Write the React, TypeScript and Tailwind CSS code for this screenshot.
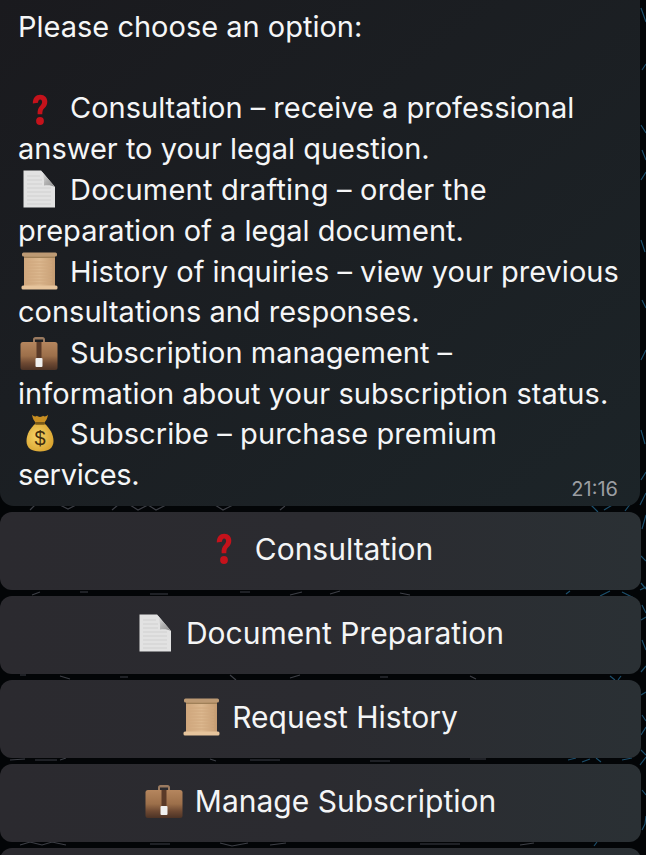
import React from "react";

type IconProps = { className?: string };

function QuestionIcon({ className }: IconProps) {
  return (
    <svg viewBox="0 0 16 32" className={className}>
      <path d="M0.800 9.500C0.800 4 3.800 0.800 8.300 0.800c4.400 0 7 2.900 7 7 0 3-1.300 4.800-3 6.500-1.500 1.500-2 2.800-2 6H5.600c-.2-4.300.7-6.500 2.500-8.400 1.300-1.400 2-2.300 2-3.900 0-1.600-.7-2.600-1.900-2.600-1.400 0-2.100 1.300-2.200 3.300z" fill="#c5121b" />
      <circle cx="8" cy="27" r="3.900" fill="#c5121b" />
    </svg>
  );
}

function DocIcon({ className }: IconProps) {
  return (
    <svg viewBox="0 0 32 38" className={className}>
      <defs>
        <linearGradient id="foldFill" x1="0" y1="0" x2="1" y2="1">
          <stop offset="0" stopColor="#f5f5f5" />
          <stop offset="0.5" stopColor="#b4b4b4" />
          <stop offset="1" stopColor="#8f8f8f" />
        </linearGradient>
      </defs>
      <path d="M0.500 0.500H18L32 17V37.500H0.500z" fill="#e2e2e2" />
      <path d="M4 6h13M4 10h15M4 14h15M4 18h24M4 22h24M4 26h24M4 30h24M4 34h24" stroke="#d0d0d0" strokeWidth="1" />
      <path d="M18 0.500L32 17c-3.500-1.800-7-2.300-11-1.500C21.500 10 20.500 4.500 18 0.500z" fill="url(#foldFill)" />
    </svg>
  );
}

function ScrollIcon({ className }: IconProps) {
  return (
    <svg viewBox="0 0 37 38" className={className}>
      <defs>
        <linearGradient id="scrollBody" x1="0" y1="0" x2="1" y2="0">
          <stop offset="0" stopColor="#cfa67c" />
          <stop offset="0.5" stopColor="#dcb88f" />
          <stop offset="1" stopColor="#c59c72" />
        </linearGradient>
      </defs>
      <rect x="3" y="3" width="31" height="32" fill="url(#scrollBody)" />
      <path d="M6 10h25M6 13h25M6 16h25M6 19h25M6 22h25M6 25h25M6 28h25M6 31h25" stroke="#d0a87e" strokeWidth="1" />
      <rect x="1" y="0.500" width="35" height="4" rx="1.500" fill="#bd9a74" />
      <rect x="3" y="4.500" width="31" height="1.500" fill="#a08058" />
      <rect x="0.500" y="33.500" width="36" height="4" rx="1.500" fill="#e6c49c" />
    </svg>
  );
}

function CaseIcon({ className, id }: IconProps & { id: string }) {
  return (
    <svg viewBox="0 0 38 35" className={className}>
      <path d="M13 8V3.500C13 2 14 1 15.500 1h7C24 1 25 2 25 3.500V8h-2V3.500h-8V8z" fill="#9a7a60" />
      <defs>
        <linearGradient id={id} x1="0" y1="0" x2="0" y2="1">
          <stop offset="0" stopColor="#b5865e" />
          <stop offset="0.5" stopColor="#9c6f4a" />
          <stop offset="0.75" stopColor="#6f4a33" />
          <stop offset="1" stopColor="#4c3225" />
        </linearGradient>
      </defs>
      <rect x="0.500" y="6" width="37" height="28" rx="2.500" fill={`url(#${id})`} />
      <rect x="16.500" y="6" width="5" height="17" fill="#5a3a28" />
      <rect x="15.500" y="22" width="7" height="9" rx="1" fill="#f0f0f0" />
    </svg>
  );
}

function BagIcon({ className }: IconProps) {
  return (
    <svg viewBox="0 0 28 38" className={className}>
      <defs>
        <radialGradient id="bagFill" cx="0.400" cy="0.450" r="0.750">
          <stop offset="0" stopColor="#f6d468" />
          <stop offset="1" stopColor="#d39a24" />
        </radialGradient>
      </defs>
      <path d="M6 0.800c2 2 3.500 2 5 1 1 1.500 5 1.500 6 0 1.500 1 3 1 5-1-.5 3.500-2 6-4 8.500h-8C8 6.800 6.500 4.300 6 0.800z" fill="#c98f22" />
      <path d="M9.500 9.500h9C23.500 14 27.500 20 27.500 27c0 7-5 10.500-13.500 10.500S.500 34 .500 27C.500 20 4.500 14 9.500 9.500z" fill="url(#bagFill)" />
      <rect x="9" y="8" width="10" height="2.800" rx="1" fill="#7a5a18" />
      <text x="14" y="31" textAnchor="middle" fontSize="20" fontFamily="Liberation Sans, sans-serif" fill="#3e2c0c">$</text>
    </svg>
  );
}

const lineClass = "block whitespace-nowrap";

function Slot({ children }: { children: React.ReactNode }) {
  return (
    <span className="inline-flex w-[52px] h-[38px] items-center align-[-8px]">
      {children}
    </span>
  );
}

function ActionButton({ icon, label, gap }: { icon?: React.ReactNode; label?: string; gap?: string }) {
  return (
    <div className="h-[78px] w-[641px] shrink-0 rounded-[12px] bg-gradient-to-r from-[#2b2a2f] via-[#2b2b30] to-[#2a3034] flex items-center justify-center pb-[4px] text-[#f4f5f6] text-[30px]">
      {label ? (
        <span className={`flex items-center ${gap}`}>
          {icon}
          <span>{label}</span>
        </span>
      ) : null}
    </div>
  );
}

function Backdrop() {
  return (
    <svg className="absolute inset-0 w-full h-full" viewBox="0 0 646 855" fill="none" strokeWidth="1.200">
      <g stroke="#1d4f6c">
        <path d="M641 8l5 14M642 70l4-6M641 125l5 8M642 150l4 10M641 180l5-8M641 240l4 12M642 300l4 8M641 360l5-10M641 430l4 14M641 480l5-8" />
        <path d="M640 505l6-12M646 515l-4 14M641 556l5 5M641 583l5 6M640 590l6-3M642 605l4 8M641 620l5-3M642 640l4 10M641 672l5-6M641 695l5-3M642 715l4 6M641 735l5-8M641 750l5 5M640 765l6-8M642 790l4 5M642 830l3-6 1-8" />
        <path d="M590 504l8 8M604 510l10-6M625 511l6-8M600 596l10-5M622 592l12 6M566 594l4-3M610 676l5 4M618 680l3-4M568 760l8-2M582 762l8-3M596 758l5 4M622 760l10-2M594 846l3-4" />
      </g>
      <g stroke="#3d3f46">
        <path d="M30 510l5-5M44 505h6M60 505l8 4 8-4M112 510l6-5M130 505l8 5 10-5 8 5 10-5M215 505l8 5 10-5M280 510l5-4" />
        <path d="M40 592l-8 3M80 592h8M150 594h18M240 592h10M290 595l12-3M330 594l10-3M400 593l10 2" />
        <path d="M20 675h6M60 676l10 3M120 677h8M230 675l6 5M290 678l10-3M380 677h8M470 676l6 3" />
        <path d="M10 760l15-1M35 760h22M60 760l6-2M210 759l6 2M250 760h30M370 761h20M470 759h16" />
        <path d="M20 845l10-3 12 3 10-3 14 3M150 844h20M220 843l12 3 16-3M270 845l16-2M420 844h40M520 845l14-2" />
      </g>
    </svg>
  );
}

export default function App() {
  return (
    <div className="relative w-[646px] h-[855px] overflow-hidden bg-[#030507] font-['Inter','Liberation_Sans',sans-serif]">
      <Backdrop />
      <div className="relative flex flex-col gap-[6px]">
        <div className="h-[506px] w-[640px] rounded-b-[14px] bg-gradient-to-br from-[#1a1a1e] to-[#1c2428] relative px-[18px] pt-[7px] text-[#f5f6f7] text-[29px] leading-[40.700px]">
          <span className={lineClass}>Please choose an option:</span>
          <span className={`${lineClass} h-[40.700px]`} />
          <span className={lineClass}>
            <Slot><QuestionIcon className="w-[16px] h-[32px] ml-[14px]" /></Slot>Consultation – receive a professional
          </span>
          <span className={lineClass}>answer to your legal question.</span>
          <span className={`${lineClass} tracking-[0.2px]`}>
            <Slot><DocIcon className="w-[32px] h-[38px] ml-[5px]" /></Slot>Document drafting – order the
          </span>
          <span className={lineClass}>preparation of a legal document.</span>
          <span className={lineClass}>
            <Slot><ScrollIcon className="w-[37px] h-[38px] ml-[3px]" /></Slot>History of inquiries – view your previous
          </span>
          <span className={lineClass}>consultations and responses.</span>
          <span className={lineClass}>
            <Slot><CaseIcon id="caseA" className="w-[38px] h-[35px] ml-[2px]" /></Slot>Subscription management –
          </span>
          <span className={`${lineClass} tracking-[0.05px]`}>information about your subscription status.</span>
          <span className={`${lineClass} tracking-[0.07px]`}>
            <Slot><BagIcon className="w-[28px] h-[38px] ml-[8px]" /></Slot>Subscribe – purchase premium
          </span>
          <span className={`${lineClass} tracking-[-0.3px]`}>services.</span>
          <span className="absolute right-[22px] bottom-[5px] text-[20px] leading-[24px] text-[#9b9ea2]">21:16</span>
        </div>
        <ActionButton gap="gap-[23px] ml-[8px]" icon={<QuestionIcon className="w-[16px] h-[32px]" />} label="Consultation" />
        <ActionButton gap="gap-[15px] ml-[2px]" icon={<DocIcon className="w-[32px] h-[38px]" />} label="Document Preparation" />
        <ActionButton gap="gap-[12px]" icon={<ScrollIcon className="w-[37px] h-[38px]" />} label="Request History" />
        <ActionButton gap="gap-[12px]" icon={<CaseIcon id="caseB" className="w-[38px] h-[35px]" />} label="Manage Subscription" />
        <ActionButton />
      </div>
    </div>
  );
}
